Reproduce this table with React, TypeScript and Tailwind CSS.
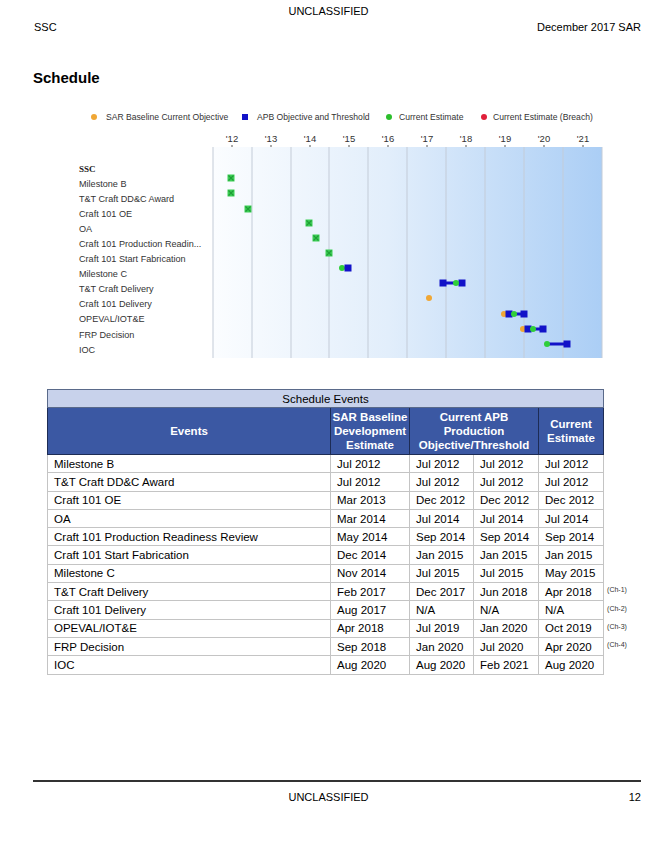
const rows = [
  ['Milestone B', 'Jul 2012', 'Jul 2012', 'Jul 2012', 'Jul 2012', ''],
  ['T&T Craft DD&C Award', 'Jul 2012', 'Jul 2012', 'Jul 2012', 'Jul 2012', ''],
  ['Craft 101 OE', 'Mar 2013', 'Dec 2012', 'Dec 2012', 'Dec 2012', ''],
  ['OA', 'Mar 2014', 'Jul 2014', 'Jul 2014', 'Jul 2014', ''],
  ['Craft 101 Production Readiness Review', 'May 2014', 'Sep 2014', 'Sep 2014', 'Sep 2014', ''],
  ['Craft 101 Start Fabrication', 'Dec 2014', 'Jan 2015', 'Jan 2015', 'Jan 2015', ''],
  ['Milestone C', 'Nov 2014', 'Jul 2015', 'Jul 2015', 'May 2015', ''],
  ['T&T Craft Delivery', 'Feb 2017', 'Dec 2017', 'Jun 2018', 'Apr 2018', '(Ch-1)'],
  ['Craft 101 Delivery', 'Aug 2017', 'N/A', 'N/A', 'N/A', '(Ch-2)'],
  ['OPEVAL/IOT&E', 'Apr 2018', 'Jul 2019', 'Jan 2020', 'Oct 2019', '(Ch-3)'],
  ['FRP Decision', 'Sep 2018', 'Jan 2020', 'Jul 2020', 'Apr 2020', '(Ch-4)'],
  ['IOC', 'Aug 2020', 'Aug 2020', 'Feb 2021', 'Aug 2020', ''],
]

const chartLabels = [
  'Milestone B',
  'T&T Craft DD&C Award',
  'Craft 101 OE',
  'OA',
  'Craft 101 Production Readin...',
  'Craft 101 Start Fabrication',
  'Milestone C',
  'T&T Craft Delivery',
  'Craft 101 Delivery',
  'OPEVAL/IOT&E',
  'FRP Decision',
  'IOC',
]

const years = ["'12", "'13", "'14", "'15", "'16", "'17", "'18", "'19", "'20", "'21"]

const GREEN = '#2fcf3a'
const BLUE = '#1212c8'
const ORANGE = '#f0a735'
const RED = '#e0203a'

// x positions of the combined marks read off the chart
const combined = [
  { x: 231, y: 178 },
  { x: 231, y: 193 },
  { x: 248, y: 209 },
  { x: 309, y: 223 },
  { x: 316, y: 238 },
  { x: 329, y: 253 },
]

function Combo({ x, y }: { x: number; y: number }) {
  return (
    <g>
      <rect x={x - 3.5} y={y - 3.5} width={7} height={7} fill="#3ccf55" />
      <path d={`M${x - 2.5} ${y - 2.5}L${x + 2.5} ${y + 2.5}M${x + 2.5} ${y - 2.5}L${x - 2.5} ${y + 2.5}`} stroke="#1f9e36" strokeWidth={1.2} />
    </g>
  )
}

function Sq({ x, y }: { x: number; y: number }) {
  return <rect x={x - 3.5} y={y - 3.5} width={7} height={7} fill={BLUE} />
}

function Dot({ x, y, c }: { x: number; y: number; c: string }) {
  return <circle cx={x} cy={y} r={3} fill={c} />
}

function Bar({ x1, x2, y }: { x1: number; x2: number; y: number }) {
  return <rect x={x1} y={y - 1.5} width={x2 - x1} height={3} fill={BLUE} />
}

function Chart() {
  const grid = [213, 252, 291, 329, 368, 407, 446, 485, 524, 563, 602]
  return (
    <svg width={657} height={262} className="block" style={{ fontFamily: '"Liberation Sans", Arial, sans-serif' }}>
      <defs>
        <linearGradient id="bg" x1="0" x2="1" y1="0" y2="0">
          <stop offset="0" stopColor="#fbfdff" />
          <stop offset="0.45" stopColor="#e2eefb" />
          <stop offset="1" stopColor="#abcef5" />
        </linearGradient>
      </defs>
      <g transform="translate(0,-103)">
        {/* legend */}
        <circle cx={94} cy={117} r={3} fill={ORANGE} />
        <text x={106} y={120} fontSize={8.6} fill="#333">SAR Baseline Current Objective</text>
        <rect x={242} y={114} width={6} height={6} fill={BLUE} />
        <text x={257} y={120} fontSize={8.6} fill="#333">APB Objective and Threshold</text>
        <circle cx={389} cy={117} r={3} fill="#2cbf2c" />
        <text x={399} y={120} fontSize={8.6} fill="#333">Current Estimate</text>
        <circle cx={484} cy={117} r={3} fill={RED} />
        <text x={493} y={120} fontSize={8.6} fill="#333">Current Estimate (Breach)</text>

        {/* years */}
        {years.map((y, i) => (
          <g key={y}>
            <text x={232 + i * 39} y={142} fontSize={9.5} fill="#333" textAnchor="middle">{y}</text>
            <rect x={231.5 + i * 39} y={145} width={1} height={2} fill="#555" />
          </g>
        ))}

        {/* plot area */}
        <rect x={213} y={147} width={389} height={211} fill="url(#bg)" />
        {grid.map((g) => (
          <rect key={g} x={g - 0.5} y={147} width={1} height={211} fill="#c4ccd8" />
        ))}

        {/* row labels */}
        <text x={79} y={172} fontSize={9} fontWeight="bold" fill="#222" style={{ fontFamily: '"Liberation Serif", serif' }}>SSC</text>
        {chartLabels.map((l, i) => (
          <text key={l} x={79} y={186.5 + i * 15.1} fontSize={9.1} fill="#333">{l}</text>
        ))}

        {/* marks */}
        {combined.map((m, i) => <Combo key={i} x={m.x} y={m.y} />)}

        {/* Milestone C */}
        <Dot x={342} y={268} c={GREEN} />
        <Sq x={348} y={268} />

        {/* T&T Craft Delivery */}
        <Bar x1={443} x2={462} y={283} />
        <Sq x={443} y={283} />
        <Sq x={462} y={283} />
        <Dot x={456} y={283} c={GREEN} />

        {/* Craft 101 Delivery */}
        <Dot x={429} y={298} c={ORANGE} />

        {/* OPEVAL */}
        <Bar x1={508} x2={524} y={314} />
        <Dot x={504} y={314} c={ORANGE} />
        <Sq x={509} y={314} />
        <Sq x={524} y={314} />
        <Dot x={514} y={314} c={GREEN} />

        {/* FRP */}
        <Bar x1={528} x2={543} y={329} />
        <Dot x={523} y={329} c={ORANGE} />
        <Sq x={528} y={329} />
        <Sq x={543} y={329} />
        <Dot x={533} y={329} c={GREEN} />

        {/* IOC */}
        <Bar x1={547} x2={567} y={344} />
        <Sq x={567} y={344} />
        <Dot x={547} y={344} c={GREEN} />
      </g>
    </svg>
  )
}

export default function App() {
  return (
    <div className="w-[657px] h-[850px] bg-white text-black flex flex-col" style={{ fontFamily: '"Liberation Sans", Arial, sans-serif' }}>
      <div className="pt-[4px] text-center text-[11px] leading-[14px]">UNCLASSIFIED</div>
      <div className="flex justify-between px-[34px] pr-[16px] text-[11px] leading-[14px] mt-[2px]">
        <span>SSC</span>
        <span>December 2017 SAR</span>
      </div>
      <h1 className="ml-[33px] mt-[35px] text-[15px] leading-[18px] font-bold">Schedule</h1>

      <div className="mt-[16px]">
        <Chart />
      </div>

      <div className="flex mt-[24px] ml-[47px]">
        <table className="border-collapse w-[556px] table-fixed text-[11.5px] leading-[14px]">
          <colgroup>
            <col className="w-[283px]" />
            <col className="w-[79px]" />
            <col className="w-[64px]" />
            <col className="w-[65px]" />
            <col className="w-[65px]" />
          </colgroup>
          <thead>
            <tr className="h-[18px] bg-[#c8d2eb]">
              <th colSpan={5} className="border border-[#5a6a8a] font-normal text-center">Schedule Events</th>
            </tr>
            <tr className="h-[47px] bg-[#3b58a3] text-white font-bold text-center">
              <th className="border border-[#1d2c55]">Events</th>
              <th className="border border-[#1d2c55]">SAR Baseline Development Estimate</th>
              <th colSpan={2} className="border border-[#1d2c55] px-1">Current APB Production Objective/Threshold</th>
              <th className="border border-[#1d2c55]">Current Estimate</th>
            </tr>
          </thead>
          <tbody>
            {rows.map((r) => (
              <tr key={r[0]} className="h-[18.3px]">
                {r.slice(0, 5).map((c, i) => (
                  <td key={i} className="border border-[#c4c4c4] px-[6px] py-0 whitespace-nowrap">{c}</td>
                ))}
              </tr>
            ))}
          </tbody>
        </table>
        <div className="pt-[65px] pl-[3px]">
          {rows.map((r) => (
            <div key={r[0]} className="h-[18.33px] text-[7px] leading-[9px] pt-[3px] text-[#333]">{r[5]}</div>
          ))}
        </div>
      </div>

      <div className="mt-auto mb-[46px]">
        <div className="mx-[33px] mr-[16px] h-[2px] bg-[#333]" />
        <div className="relative mt-[8px] text-[11px] leading-[14px] text-center">
          UNCLASSIFIED
          <span className="absolute right-[16px] top-0">12</span>
        </div>
      </div>
    </div>
  )
}
